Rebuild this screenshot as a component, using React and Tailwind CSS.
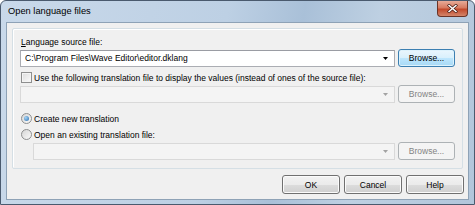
// App.jsx
const font = { fontFamily: '"Liberation Sans", Arial, sans-serif' };

const Arrow = ({ disabled }) => (
    <svg width="5" height="3" viewBox="0 0 5 3" className="shrink-0">
        <path d="M0 0h5L2.5 3z" fill={disabled ? "#a3a3a3" : "#000"} />
    </svg>
);

const Combo = ({ value, disabled }) => (
    <div
        className={
            "flex-1 h-[17px] flex items-center pl-[4px] pr-[6px] border " +
            (disabled
                ? "bg-[#f4f4f4] border-[#d9d9d9]"
                : "bg-white border-[#abadb3] border-t-[#9a9ca3]")
        }
    >
        <span className="flex-1 truncate text-black">{value}</span>
        <Arrow disabled={disabled} />
    </div>
);

const Button = ({ children, variant = "normal", className = "" }) => {
    const look = {
        normal:
            "border-[#707070] text-black bg-[linear-gradient(#f2f2f2_0%,#ebebeb_50%,#dddddd_50%,#cfcfcf_100%)] shadow-[inset_0_0_0_1px_#fbfbfb]",
        focus:
            "border-[#3c7fb1] text-black bg-[linear-gradient(#eaf6fd_0%,#d9f0fc_50%,#bee6fd_50%,#a7d9f5_100%)] shadow-[inset_0_0_0_1px_#ddf2fc]",
        disabled: "border-[#adb2b5] text-[#838383] bg-[#f4f4f4]",
    }[variant];
    return (
        <div
            className={
                "h-[18px] w-[57px] flex items-center justify-center border rounded-[3px] shrink-0 " +
                look +
                " " +
                className
            }
        >
            {children}
        </div>
    );
};

const Check = () => (
    <div className="w-[11px] h-[11px] border border-[#8e8f8f] bg-[linear-gradient(135deg,#dcdcdc,#fbfbfb)] shadow-[inset_0_0_0_1px_#f4f4f4] shrink-0" />
);

const Radio = ({ on }) => (
    <div className="w-[11px] h-[11px] rounded-full border border-[#8e8f8f] bg-[linear-gradient(135deg,#d6d6d6,#fafafa)] flex items-center justify-center shrink-0">
        {on && (
            <div className="w-[5px] h-[5px] rounded-full bg-[radial-gradient(circle_at_35%_35%,#a6d4f5,#2a6eb0)]" />
        )}
    </div>
);

export default function App() {
    return (
        <div className="w-[475px] h-[205px] bg-white text-[8.5px] leading-[10px]" style={font}>
            <div className="w-full h-full flex flex-col rounded-t-[6px] border border-[#4a5a6e] bg-[linear-gradient(100deg,#c9d9ea_0%,#bdd0e4_45%,#a9c0d8_60%,#bed0e2_75%,#b2c6db_100%)] overflow-hidden">
                {/* Title bar */}
                <div className="h-[21px] flex items-start justify-between pl-[7px] pr-[6px] shrink-0">
                    <span className="text-[9.3px] leading-[20px] text-black">Open language files</span>
                    <div className="w-[31px] h-[16px] mt-0 rounded-b-[4px] border border-[#6b3326] border-t-0 bg-[linear-gradient(#e7ab98_0%,#d77a60_45%,#c2492b_55%,#d3856a_100%)] flex items-center justify-center">
                        <svg width="11" height="9" viewBox="0 0 11 9">
                            <path d="M1 0.5L10 8.5M10 0.5L1 8.5" stroke="#4a2018" strokeWidth="3" />
                            <path d="M1.5 1L9.5 8M9.5 1L1.5 8" stroke="#fff" strokeWidth="1.6" />
                        </svg>
                    </div>
                </div>

                {/* Client area */}
                <div className="flex-1 mx-[5px] mb-[4px] border border-[#8ea2b6] bg-[#f0f0f0] flex flex-col">
                    <div className="mx-[5px] mt-[5px] border border-[#d5dfe5] rounded-[2px] shadow-[inset_1px_1px_0_#fff] flex flex-col pl-[7px] pr-[7px] pb-[8px]">
                        <div className="mt-[8px] ml-px">
                            <span className="underline decoration-[0.5px] underline-offset-1">L</span>anguage source file:
                        </div>
                        <div className="mt-[2px] flex items-center gap-[3px]">
                            <Combo value="C:\Program Files\Wave Editor\editor.dklang" />
                            <Button variant="focus">Browse...</Button>
                        </div>
                        <div className="mt-[4px] flex items-center gap-[2px] h-[13px] ml-px">
                            <Check />
                            <span>Use the following translation file to display the values (instead of ones of the source file):</span>
                        </div>
                        <div className="mt-px flex items-center gap-[3px]">
                            <Combo value="" disabled />
                            <Button variant="disabled">Browse...</Button>
                        </div>
                        <div className="mt-[9px] flex items-center gap-[2px] h-[13px] ml-px">
                            <Radio on />
                            <span>Create new translation</span>
                        </div>
                        <div className="mt-[3px] flex items-center gap-[2px] h-[13px] ml-px">
                            <Radio />
                            <span>Open an existing translation file:</span>
                        </div>
                        <div className="mt-px flex items-center gap-[3px] pl-[13px]">
                            <Combo value="" disabled />
                            <Button variant="disabled">Browse...</Button>
                        </div>
                    </div>
                    <div className="mt-[6px] mr-[4px] flex justify-end gap-[4px]">
                        <Button className="w-[58px] h-[19px]">OK</Button>
                        <Button className="w-[58px] h-[19px]">Cancel</Button>
                        <Button className="w-[58px] h-[19px]">Help</Button>
                    </div>
                </div>
            </div>
        </div>
    );
}
